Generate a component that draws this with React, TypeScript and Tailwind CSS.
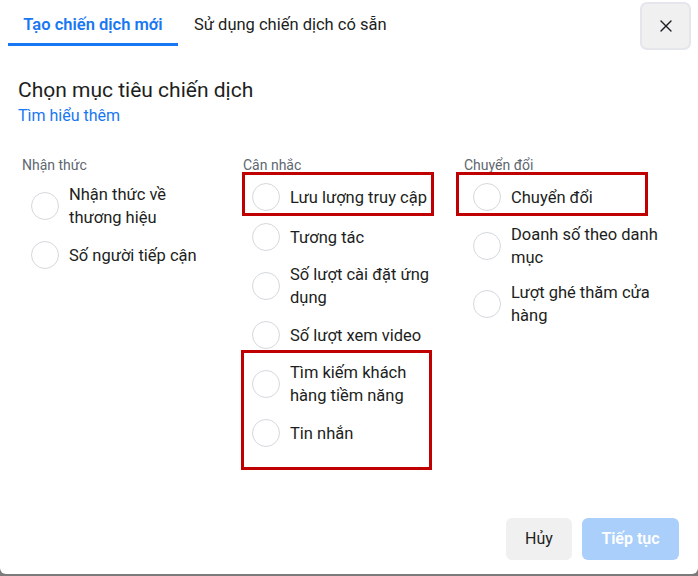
import { X } from "lucide-react";

type Item = { label: string };

const COLUMNS: { title: string; items: Item[] }[] = [
  {
    title: "Nhận thức",
    items: [{ label: "Nhận thức về thương hiệu" }, { label: "Số người tiếp cận" }],
  },
  {
    title: "Cân nhắc",
    items: [
      { label: "Lưu lượng truy cập" },
      { label: "Tương tác" },
      { label: "Số lượt cài đặt ứng dụng" },
      { label: "Số lượt xem video" },
      { label: "Tìm kiếm khách hàng tiềm năng" },
      { label: "Tin nhắn" },
    ],
  },
  {
    title: "Chuyển đổi",
    items: [
      { label: "Chuyển đổi" },
      { label: "Doanh số theo danh mục" },
      { label: "Lượt ghé thăm cửa hàng" },
    ],
  },
];

function Radio({ label }: Item) {
  return (
    <div className="flex items-center py-[6px] pl-[9px]">
      <span className="w-[28px] h-[28px] rounded-full border border-[#d5d8dc] bg-white flex-shrink-0" />
      <span className="ml-[10px] w-[152px] text-[16.5px] leading-[23px] text-[#1c1e21]">{label}</span>
    </div>
  );
}

export default function App() {
  return (
    <div className="w-[698px] h-[576px] bg-[#7b7b7b]" style={{ fontFamily: "Roboto, 'Noto Sans', sans-serif" }}>
      <div className="relative w-[698px] h-[574px] bg-white rounded-b-[6px] overflow-hidden">
        {/* Tabs */}
        <div className="flex items-start">
          <div className="ml-[8px] w-[170px] h-[46px] border-b-[3px] border-[#1877f2] flex items-center justify-center">
            <span className="text-[16.5px] font-semibold text-[#1877f2] pt-[7px]">Tạo chiến dịch mới</span>
          </div>
          <div className="h-[46px] flex items-center ml-[16px]">
            <span className="text-[16.5px] text-[#1c1e21] pt-[4px]">Sử dụng chiến dịch có sẵn</span>
          </div>
          <button className="ml-auto mr-[7px] mt-[2px] w-[51px] h-[48px] rounded-[7px] border-2 border-[#e4e6eb] bg-[#f0f0f0] flex items-center justify-center text-[#1c1e21]">
            <X size={20} strokeWidth={1.6} />
          </button>
        </div>

        {/* Title */}
        <div className="px-[18px] mt-[28px]">
          <h2 className="text-[21px] leading-[24px] text-[#1c1e21]">Chọn mục tiêu chiến dịch</h2>
          <a className="block text-[16px] leading-[20px] text-[#1877f2] mt-[4px]">Tìm hiểu thêm</a>
        </div>

        {/* Columns */}
        <div className="flex pl-[22px] mt-[31px]">
          {COLUMNS.map(col => (
            <div key={col.title} className="w-[221px] flex-shrink-0">
              <p className="text-[14px] leading-[16px] text-[#606770]">{col.title}</p>
              <div className="mt-[4px]">
                {col.items.map(it => <Radio key={it.label} label={it.label} />)}
              </div>
            </div>
          ))}
        </div>

        {/* Annotation boxes */}
        <div className="absolute left-[242px] top-[172px] w-[192px] h-[44px] border-[3px] border-[#c00000]" />
        <div className="absolute left-[456px] top-[172px] w-[192px] h-[44px] border-[3px] border-[#c00000]" />
        <div className="absolute left-[241px] top-[350px] w-[191px] h-[120px] border-[3px] border-[#c00000]" />

        {/* Footer */}
        <div className="absolute right-[19px] top-[518px] flex gap-[10px]">
          <button className="w-[66px] h-[42px] rounded-[6px] bg-[#f0f0f0] text-[16px] text-[#1c1e21]">Hủy</button>
          <button className="w-[97px] h-[42px] rounded-[6px] bg-[#aacffa] text-[16px] font-semibold text-white">Tiếp tục</button>
        </div>
      </div>
    </div>
  );
}
